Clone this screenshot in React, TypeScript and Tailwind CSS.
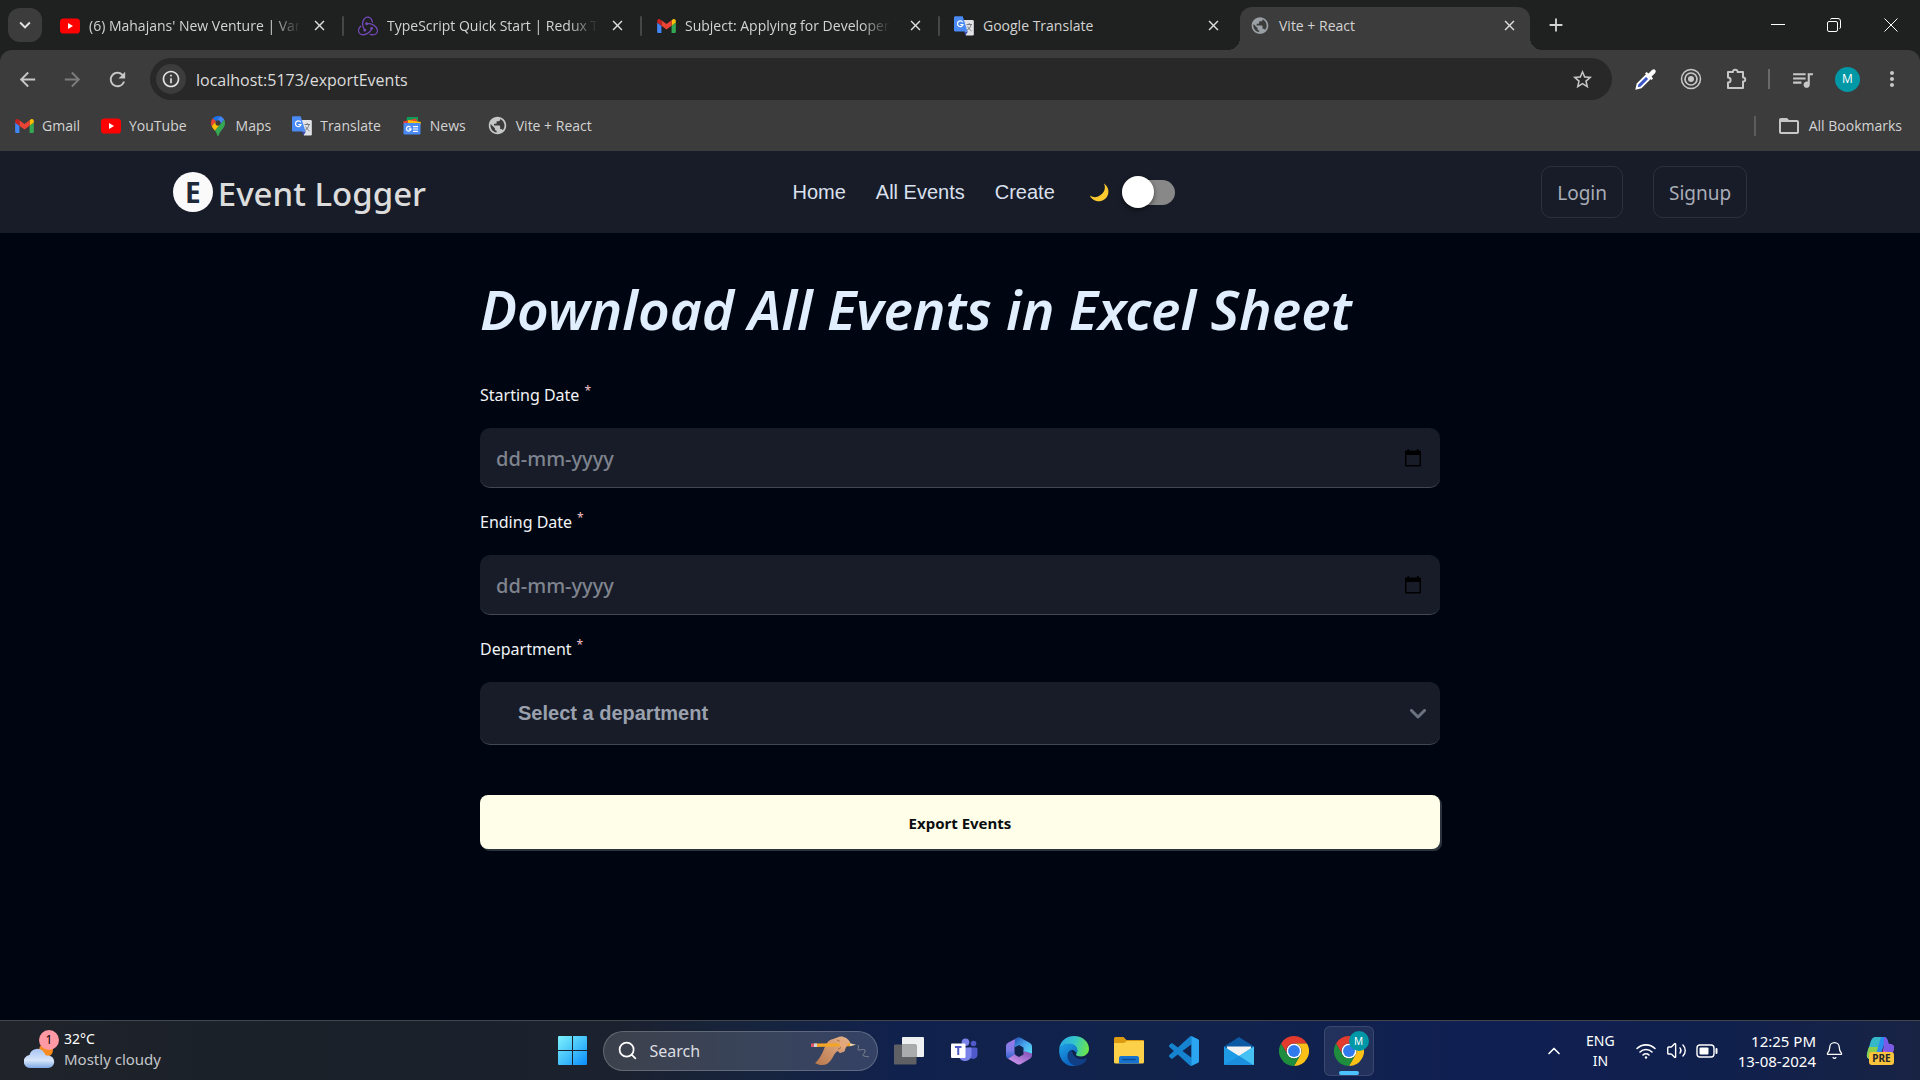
import { useState, type ReactNode } from "react";
import {
  MdArrowBack,
  MdArrowForward,
  MdRefresh,
  MdInfoOutline,
  MdStarOutline,
  MdQueueMusic,
  MdMoreVert,
  MdKeyboardArrowDown,
  MdFolderOpen,
  MdClose,
  MdAdd,
  MdPublic,
} from "react-icons/md";
import { SiRedux } from "react-icons/si";
import { Bell, ChevronUp, Search, Volume2 } from "lucide-react";

function YouTubeIcon() {
  return (
    <svg viewBox="0 0 20 16" className="h-4 w-5 shrink-0" aria-hidden="true">
      <rect width="20" height="15" y="0.5" rx="3.6" fill="#ff0000" />
      <path d="M8 5v6l5-3z" fill="#fff" />
    </svg>
  );
}

function GmailIcon() {
  return (
    <svg viewBox="52 42 88 66" className="h-[14px] w-[19px] shrink-0" aria-hidden="true">
      <path fill="#4285f4" d="M58 108h14V74L52 59v43c0 3.32 2.69 6 6 6" />
      <path fill="#34a853" d="M120 108h14c3.32 0 6-2.69 6-6V59l-20 15" />
      <path fill="#fbbc04" d="M120 48v26l20-15v-8c0-7.42-8.47-11.65-14.4-7.2" />
      <path fill="#ea4335" d="M72 74V48l24 18 24-18v26L96 92" />
      <path fill="#c5221f" d="M52 51v8l20 15V48l-5.6-4.2c-5.94-4.45-14.4-.22-14.4 7.2" />
    </svg>
  );
}

function MapsIcon() {
  return (
    <svg viewBox="0 0 92.3 132.3" className="h-5 w-5 shrink-0" aria-hidden="true">
      <path fill="#1a73e8" d="M60.2 2.2C55.8.8 51 0 46.1 0 32 0 19.3 6.4 10.8 16.5l21.8 18.3L60.2 2.2z" />
      <path fill="#ea4335" d="M10.8 16.5C4.1 24.5 0 34.9 0 46.1c0 8.7 1.7 15.7 4.6 22l28-33.3-21.8-18.3z" />
      <path
        fill="#4285f4"
        d="M46.2 28.5c9.8 0 17.7 7.9 17.7 17.7 0 4.3-1.6 8.3-4.2 11.4 0 0 13.9-16.6 27.5-32.7-5.6-10.8-15.3-19-27-22.7L32.6 34.8c3.3-3.8 8.1-6.3 13.6-6.3"
      />
      <path
        fill="#fbbc04"
        d="M46.2 63.8c-9.8 0-17.7-7.9-17.7-17.7 0-4.3 1.5-8.3 4.1-11.3l-28 33.3c4.8 10.6 12.8 19.2 21 29.9l34.1-40.5c-3.3 3.9-8.1 6.3-13.5 6.3"
      />
      <path
        fill="#34a853"
        d="M59.1 109.2c15.4-24.1 33.3-35 33.3-63 0-7.7-1.9-14.9-5.2-21.3L25.6 98c2.6 3.4 5.3 7.3 7.9 11.3 9.4 14.5 6.8 23.1 12.8 23.1s3.4-8.7 12.8-23.2"
      />
    </svg>
  );
}

function TranslateIcon() {
  return (
    <svg viewBox="0 0 20 20" className="size-5 shrink-0" aria-hidden="true">
      <path d="M8 4h10.500a1.300 1.300 0 0 1 1.300 1.300v13a1.300 1.300 0 0 1-1.300 1.300H12z" fill="#e1e3e6" />
      <path d="M10 15.500h4l-2.600 4z" fill="#3949ab" />
      <path d="M1.300.3h7.400l4.800 15.200H1.300A1.300 1.300 0 0 1 0 14.200V1.600A1.300 1.300 0 0 1 1.300.3z" fill="#4a8af4" />
      <path d="M8.700 6.300A2.800 2.800 0 1 0 9 8.500H6.300" fill="none" stroke="#fff" strokeWidth="1.200" />
      <path d="M12.500 8.500h5.500M15.200 7v1.500M17 8.500c-.4 2.600-2 4.700-4 5.800M13.700 10.500c.8 1.900 2 3.300 3.800 4.400" fill="none" stroke="#6b7177" strokeWidth="0.900" />
    </svg>
  );
}

function NewsIcon() {
  return (
    <svg viewBox="0 0 20 18" className="h-[18px] w-5 shrink-0" aria-hidden="true">
      <path d="M5 0h11v7H4z" fill="#0c9d58" />
      <path d="M1 4.500l13-3 3 6H2z" fill="#ea4335" />
      <path d="M6 3l13 2-1.500 5H6z" fill="#ffc107" />
      <rect x="1.500" y="6" width="17" height="11.500" rx="1.200" fill="#4a8af4" />
      <path d="M8.500 10.300A2.300 2.300 0 1 0 9 12H6.700" fill="none" stroke="#fff" strokeWidth="1.300" />
      <path d="M11 9.700h5M11 12h5M11 14.300h5" stroke="#fff" strokeWidth="1.200" />
    </svg>
  );
}

function ChromeIcon() {
  return (
    <svg viewBox="0 0 48 48" className="size-[30px]" aria-hidden="true">
      <circle cx="24" cy="24" r="12" fill="#fff" />
      <path d="M24 12h20.781a23.994 23.994 0 0 0-41.564.003L13.608 30l.009-.002A11.985 11.985 0 0 1 24 12z" fill="#e33b2e" />
      <path d="M34.391 30.003L24.001 48A23.994 23.994 0 0 0 44.780 12.003H23.999l-.003.009a11.985 11.985 0 0 1 10.395 17.991z" fill="#fbc116" />
      <path d="M13.609 30.003L3.218 12.006A23.994 23.994 0 0 0 24.003 48l10.390-17.997-.007-.007a11.985 11.985 0 0 1-20.778.007z" fill="#1e8e3e" />
      <circle cx="24" cy="24" r="9.500" fill="#2f7bee" />
    </svg>
  );
}

function WindowsIcon() {
  return (
    <svg viewBox="0 0 29 29" className="size-[29px]" aria-hidden="true">
      <defs>
        <linearGradient id="win" x1="0" y1="0" x2="1" y2="1">
          <stop offset="0" stopColor="#7df1fd" />
          <stop offset="0.500" stopColor="#45c3fb" />
          <stop offset="1" stopColor="#0a8cfb" />
        </linearGradient>
      </defs>
      <path d="M1 0h13v14H0V1a1 1 0 0 1 1-1zM15 0h13a1 1 0 0 1 1 1v13H15zM0 15h14v14H1a1 1 0 0 1-1-1zM15 15h14v13a1 1 0 0 1-1 1H15z" fill="url(#win)" />
    </svg>
  );
}

function TaskViewIcon() {
  return (
    <svg viewBox="0 0 30 28" className="h-7 w-[30px]" aria-hidden="true">
      <rect x="8" y="0" width="22" height="20" rx="1" fill="#eef0f2" />
      <rect x="0" y="7.500" width="22.500" height="20" rx="1" fill="#5e6063" />
      <path d="M8 8h14.500v12H8z" fill="#a9abad" />
    </svg>
  );
}

function TeamsIcon() {
  return (
    <svg viewBox="0 0 28 26" className="h-[26px] w-7" aria-hidden="true">
      <circle cx="23.500" cy="5.500" r="2.800" fill="#5059c9" />
      <path d="M19 9.500h7a1.500 1.500 0 0 1 1.500 1.500v5.500a4.500 4.500 0 0 1-8.500 2z" fill="#5059c9" />
      <circle cx="15.500" cy="4.300" r="3.800" fill="#7b83eb" />
      <path d="M10 9.500h10.500a1 1 0 0 1 1 1V17a6.500 6.500 0 0 1-12.500 2z" fill="#7b83eb" />
      <rect x="1" y="5.500" width="14.500" height="14.500" rx="1" fill="#fff" />
      <path d="M5 9h6.500M8.250 9v8" stroke="#5059c9" strokeWidth="2" />
    </svg>
  );
}

function OfficeIcon() {
  return (
    <svg viewBox="0 0 26 28" className="h-7 w-[26px]" aria-hidden="true">
      <defs>
        <linearGradient id="off1" x1="0" y1="0" x2="0" y2="1">
          <stop offset="0" stopColor="#a678e6" />
          <stop offset="0.600" stopColor="#7a7ce8" />
          <stop offset="1" stopColor="#2f62c8" />
        </linearGradient>
        <linearGradient id="off2" x1="0" y1="0" x2="1" y2="1">
          <stop offset="0" stopColor="#1c4fae" />
          <stop offset="0.500" stopColor="#4aa6f0" />
          <stop offset="1" stopColor="#58e1f2" />
        </linearGradient>
        <linearGradient id="off3" x1="0" y1="1" x2="1" y2="0">
          <stop offset="0" stopColor="#d9a2f7" />
          <stop offset="1" stopColor="#7a4bb0" />
        </linearGradient>
      </defs>
      <path d="M12 0.500L2 5.800Q0 6.900 0 9v9.500q0 2.200 2 3.200L9.500 18 8.500 16V9.500z" fill="url(#off1)" />
      <path d="M9 2l3-1.600q1-.5 2 0L24 6q2 1.200 2 3.500v8L17.500 15v-4.500L13 8 8.500 10.500z" fill="url(#off2)" />
      <path d="M26 16.500V18.500q0 2-2 3.200L15 27q-2 1.200-4 0L2 21.700l6.500-4.200L13 20l4.500-2.500V14z" fill="url(#off3)" />
    </svg>
  );
}

function EdgeIcon() {
  return (
    <svg viewBox="0 0 30 30" className="size-[30px]" aria-hidden="true">
      <defs>
        <linearGradient id="edge1" x1="0" y1="0.300" x2="1" y2="0.500">
          <stop offset="0" stopColor="#2aa9e8" />
          <stop offset="0.500" stopColor="#35c6c8" />
          <stop offset="1" stopColor="#6be64a" />
        </linearGradient>
        <linearGradient id="edge2" x1="0" y1="0" x2="0.500" y2="1">
          <stop offset="0" stopColor="#1fa4e8" />
          <stop offset="1" stopColor="#0c62bd" />
        </linearGradient>
      </defs>
      <path d="M.2 14C.2 6 6.800 0 15 0c9 0 15 6.200 15 12.800 0 4.700-3.700 7.700-8 7.700-3 0-5-1-5-2 0-.8 1.300-1.500 1.300-4C18 10.500 14.500 8 10 8 4.500 8 1 11 .2 14z" fill="url(#edge1)" />
      <path d="M.1 14.500C1 10.500 5 7.500 10 7.500c5 0 8.300 3 8.300 6.500 0 1.500-.6 2.600-1.200 3.400-.3-2-2-3.400-3.800-3.400-3 0-5 3-4.300 7 .7 4.500 4.500 8.500 9 8.700C8 32 .1 25 .1 14.500z" fill="url(#edge2)" />
      <path d="M13 14c-3 1-5.200 4-4.300 8 1 4.500 5 7.600 9.300 7.700 4.500-.5 8-3 9.800-6.500.4-.8-.2-1-1-.7-4 1.600-9.800.5-12.200-3.500-1.200-2-1.500-3.700-1.600-5z" fill="#103f86" />
    </svg>
  );
}

function ExplorerIcon() {
  return (
    <svg viewBox="0 0 30 27" className="h-[27px] w-[30px]" aria-hidden="true">
      <path d="M0 1.500Q0 0 1.500 0h8l3 3H29q1 0 1 1v5H0z" fill="#dc9a10" />
      <path d="M0 6h10l3-2h17v21q0 1.500-1.500 1.500h-27Q0 26.500 0 25z" fill="#fdd04a" />
      <path d="M5 26.500V21q0-2 2-2h16q2 0 2 2v5.500z" fill="#1673cf" />
      <path d="M9 22.500h12" stroke="#0b4b94" strokeWidth="1.400" strokeLinecap="round" />
    </svg>
  );
}

function VsCodeIcon() {
  return (
    <svg viewBox="0 0 24 24" className="size-[30px]" aria-hidden="true">
      <path
        d="M23.150 2.587L18.210.21a1.494 1.494 0 0 0-1.705.29l-9.460 8.630-4.120-3.128a.999.999 0 0 0-1.276.057L.327 7.261A1 1 0 0 0 .326 8.740L3.899 12 .326 15.260a1 1 0 0 0 .001 1.479L1.650 17.940a.999.999 0 0 0 1.276.057l4.120-3.128 9.460 8.630a1.492 1.492 0 0 0 1.704.29l4.942-2.377A1.500 1.500 0 0 0 24 20.060V3.939a1.500 1.500 0 0 0-.85-1.352zm-5.146 14.861L10.826 12l7.178-5.448v10.896z"
        fill="#1583cf"
      />
      <path d="M18.004 0.150l5.146 2.437A1.500 1.500 0 0 1 24 3.939V20.060a1.500 1.500 0 0 1-.85 1.352L18.004 23.850z" fill="#2ba5ef" />
    </svg>
  );
}

function MailIcon() {
  return (
    <svg viewBox="0 0 30 28" className="h-7 w-[30px]" aria-hidden="true">
      <path d="M15 0L0 9.500V14h30V9.500z" fill="#0c59a4" />
      <path d="M3 9.500h24V16l-12 6-12-6z" fill="#f3f3f3" />
      <path d="M0 9.500L15 19l15-9.500V27q0 1-1 1H1q-1 0-1-1z" fill="#1f9be6" />
      <path d="M15 19l15-9.500V27q0 1-1 1z" fill="#46c1f3" />
      <path d="M0 28l15-9 14 9z" fill="#1b8fdd" />
    </svg>
  );
}

function PencilHand() {
  return (
    <svg viewBox="0 0 58 30" className="h-[30px] w-[58px]" aria-hidden="true">
      <defs>
        <linearGradient id="skin" x1="1" y1="0" x2="0" y2="1">
          <stop offset="0" stopColor="#e8b58c" />
          <stop offset="1" stopColor="#b9774d" />
        </linearGradient>
      </defs>
      <path d="M4 27c4-3 7-9 9-14 2-5 4-9 9-10l7-2.500c4-.5 8 2 10 5.500 1 2-1 4-3 4l-2 1c1 3-1 6-3 5-1 2-3 1-4-1-2 1-3 2-4 4-2 4-4 7-7 9-4 2-9 1-12-1z" fill="url(#skin)" />
      <path d="M26 4c3 1 5 3 7 5M27 13c2 0 3-1 3-3" fill="none" stroke="#a4663f" strokeWidth="0.900" />
      <path d="M3 7.500l36-.2v3L3 11z" fill="#f4a526" />
      <path d="M0 7.500h3V11H0z" fill="#e0566b" />
      <path d="M3 7.500h3V11H3z" fill="#cfd3d8" />
      <path d="M39 7.300l6 1.500-6 1.500z" fill="#f2d7a8" />
      <path d="M28 6c3-3 8-2 9 2l-3 5c-3 0-6-3-6-7z" fill="#e2a87c" />
      <path d="M47 9c2 3-2 5 1 5s6-2 6 1-4 4-1 5 3 0 5 1" fill="none" stroke="#7f8490" strokeWidth="1" />
    </svg>
  );
}

function WeatherIcon() {
  return (
    <svg viewBox="0 0 31 28" className="h-7 w-[31px]" aria-hidden="true">
      <defs>
        <linearGradient id="cloud" x1="0" y1="0" x2="0" y2="1">
          <stop offset="0" stopColor="#a9c5f4" />
          <stop offset="0.600" stopColor="#d6e5fb" />
          <stop offset="1" stopColor="#7fa8e6" />
        </linearGradient>
      </defs>
      <circle cx="22" cy="9" r="7" fill="#f78b1f" />
      <path d="M7 27a6.500 6.500 0 0 1-1.500-13A8 8 0 0 1 20 11.500q1.500 1.500 1.800 3H24a6.200 6.200 0 0 1 0 12.500z" fill="url(#cloud)" />
    </svg>
  );
}

function CopilotIcon() {
  return (
    <svg viewBox="0 0 30 30" className="size-[30px]" aria-hidden="true">
      <path d="M11 1h8q2.500 0 3.500 3l1.500 5h-5l-5 14H6q-5 0-4-5L6 5q1.500-4 5-4z" fill="#2a8df0" />
      <path d="M6 5q1.500-4 5-4h5l-4.500 15q-1.500 7-6 7Q1 23 2 18z" fill="#35b9c8" />
      <path d="M2 18q1-5 2-7h9l-1.500 5q-1.500 7-6 7Q1 23 2 18z" fill="#8ccf4a" />
      <path d="M20 8h4q6 0 5 5l-3.500 11q-1 4-5 4H12q-3 0-3.500-3h6z" fill="#d858c8" />
      <path d="M19 1q2.500 0 3.500 3l1.300 4q6.200 0 5.200 5l-1.500 4-9-2z" fill="#7a5be8" />
      <rect x="4" y="16" width="25" height="13" rx="3" fill="#f9c33c" />
      <text x="16.500" y="26" textAnchor="middle" fontSize="10" fontWeight="700" fontFamily="Noto Sans, sans-serif" fill="#20242c">
        PRE
      </text>
    </svg>
  );
}

function Tab({ icon, title, active, divider, fade }: { icon: ReactNode; title: string; active?: boolean; divider?: boolean; fade?: boolean }) {
  return (
    <div
      className={
        active
          ? "relative flex h-[43px] w-[290px] shrink items-center gap-[9px] self-end rounded-t-xl bg-[#3c3c3c] pr-[11px] pb-[6px] pl-[10px]"
          : "flex h-[43px] w-[298px] shrink items-center gap-[9px] self-end pr-[2px] pb-[6px] pl-3"
      }
    >
      {active && (
        <>
          <span className="absolute bottom-0 -left-3 size-3 bg-[radial-gradient(circle_at_0_0,transparent_12px,#3c3c3c_12px)]" />
          <span className="absolute -right-3 bottom-0 size-3 bg-[radial-gradient(circle_at_100%_0,transparent_12px,#3c3c3c_12px)]" />
        </>
      )}
      <span className="flex w-5 shrink-0 justify-center">{icon}</span>
      <span className="min-w-0 flex-1 whitespace-nowrap">
        <span className={fade ? "inline-block [mask-image:linear-gradient(to_right,black_86%,transparent)]" : "inline-block"}>{title}</span>
      </span>
      <button type="button" aria-label={"Close " + title} className="flex w-5 shrink-0 justify-center text-[#dedede]">
        <MdClose size={17} />
      </button>
      {!active && <span className={divider ? "ml-1 h-5 w-[2px] rounded bg-[#454746]" : "ml-1 w-[2px]"} />}
    </div>
  );
}

function Bookmark({ icon, label }: { icon: ReactNode; label: string }) {
  return (
    <a href="#bookmark" className="flex items-center gap-2 whitespace-nowrap">
      {icon}
      {label}
    </a>
  );
}

function BrowserChrome() {
  return (
    <header className="bg-[#1f2120] font-['Open_Sans','Noto_Sans',sans-serif] text-sm text-[#d3d3d3]">
      <div className="flex h-[50px] items-center pl-2">
        <button type="button" aria-label="Search tabs" className="mr-[6px] flex size-[34px] shrink-0 items-center justify-center rounded-xl bg-[#3c3c3c] text-[#e3e3e3]">
          <MdKeyboardArrowDown size={22} />
        </button>
        <Tab icon={<YouTubeIcon />} title="(6) Mahajans' New Venture | Var" fade divider />
        <Tab icon={<SiRedux size={20} color="#764abc" />} title="TypeScript Quick Start | Redux T" fade divider />
        <Tab icon={<GmailIcon />} title="Subject: Applying for Developer" fade divider />
        <Tab icon={<TranslateIcon />} title="Google Translate" />
        <Tab icon={<MdPublic size={21} color="#9aa0a6" />} title="Vite + React" active />
        <button type="button" aria-label="New tab" className="ml-[15px] text-[#d3d3d3]">
          <MdAdd size={22} />
        </button>
        <div className="ml-auto flex items-center text-white">
          <button type="button" aria-label="Minimize" className="flex w-14 justify-center">
            <svg viewBox="0 0 14 14" className="size-[14px]">
              <path d="M0 6.500h14" stroke="currentColor" />
            </svg>
          </button>
          <button type="button" aria-label="Restore" className="flex w-14 justify-center">
            <svg viewBox="0 0 14 14" className="size-[14px]" fill="none" stroke="currentColor">
              <rect x="0.500" y="3.500" width="10" height="10" rx="1.500" />
              <path d="M3.500 1.500q0-1 1.500-1h6q2.500 0 2.500 2.500v6q0 1.500-1 1.500" />
            </svg>
          </button>
          <button type="button" aria-label="Close window" className="flex w-[58px] justify-center">
            <svg viewBox="0 0 14 14" className="size-[14px]">
              <path d="M0.500 0.500l13 13M13.500 0.500l-13 13" stroke="currentColor" />
            </svg>
          </button>
        </div>
      </div>

      <div className="rounded-t-xl bg-[#3c3c3c]">
        <div className="flex items-center pt-2 pr-4 pl-4 text-[#c7c7c7]">
          <div className="flex w-[134px] items-center gap-[22px]">
            <button type="button" aria-label="Back">
              <MdArrowBack size={23} />
            </button>
            <button type="button" aria-label="Forward" className="text-[#7c7c7c]">
              <MdArrowForward size={23} />
            </button>
            <button type="button" aria-label="Reload">
              <MdRefresh size={23} />
            </button>
          </div>
          <div className="flex h-[42px] flex-1 items-center rounded-full bg-[#282828] pr-[18px] pl-[6px]">
            <button type="button" aria-label="Site information" className="flex size-[30px] items-center justify-center rounded-full bg-[#3c3c3c] text-[#e3e3e3]">
              <MdInfoOutline size={20} />
            </button>
            <input
              aria-label="Address"
              defaultValue="localhost:5173/exportEvents"
              className="ml-[10px] min-w-0 flex-1 bg-transparent pt-px text-base text-[#dcdcdc] outline-none"
            />
            <button type="button" aria-label="Bookmark this page">
              <MdStarOutline size={23} />
            </button>
          </div>
          <div className="flex items-center pl-[22px]">
            <button type="button" aria-label="Color picker">
              <svg viewBox="0 0 24 24" className="size-6">
                <path d="M2.500 21.500l1-4.500L12 8.500l3.500 3.500L7 20.500z" fill="#3a55c8" stroke="#fff" strokeWidth="1.800" />
                <path d="M11 6.500l1.500-1.500 2 1.500L18 3q2-1.500 3.300 0 1.200 1.500-.3 3.200L17.500 9.500l1.500 2-1.500 1.500z" fill="#fff" />
              </svg>
            </button>
            <button type="button" aria-label="Recorder" className="ml-[21px]">
              <svg viewBox="0 0 24 24" className="size-6" fill="none" stroke="currentColor">
                <circle cx="12" cy="12" r="9.500" strokeWidth="1.500" />
                <circle cx="12" cy="12" r="6" strokeWidth="1.700" />
                <circle cx="12" cy="12" r="3" fill="currentColor" stroke="none" />
              </svg>
            </button>
            <button type="button" aria-label="Extensions" className="ml-[21px]">
              <svg viewBox="0 0 24 24" className="size-6" fill="none" stroke="currentColor" strokeWidth="2" strokeLinejoin="round">
                <path d="M4 5h5c-.5-3 5-3 4.500 0H19v5.500c3-.5 3 4.500 0 4V21H4v-5.500c3.500 0 3.500-5 0-5z" />
              </svg>
            </button>
            <span className="mx-[20px] h-5 w-[2px] bg-[#6a6a6a]" />
            <button type="button" aria-label="Media controls">
              <MdQueueMusic size={25} />
            </button>
            <button type="button" aria-label="Profile" className="ml-5 flex size-[25px] items-center justify-center rounded-full bg-[#0097a7] text-xs text-white">
              M
            </button>
            <button type="button" aria-label="Menu" className="ml-5">
              <MdMoreVert size={24} />
            </button>
          </div>
        </div>
        <nav aria-label="Bookmarks" className="flex h-[51px] items-center gap-[21px] pr-[18px] pl-[15px]">
          <Bookmark icon={<GmailIcon />} label="Gmail" />
          <Bookmark icon={<YouTubeIcon />} label="YouTube" />
          <Bookmark icon={<MapsIcon />} label="Maps" />
          <Bookmark icon={<TranslateIcon />} label="Translate" />
          <Bookmark icon={<NewsIcon />} label="News" />
          <Bookmark icon={<MdPublic size={21} color="#c4c7c5" />} label="Vite + React" />
          <span className="ml-auto h-5 w-[2px] bg-[#5c5c5c]" />
          <Bookmark icon={<MdFolderOpen size={24} color="#c7c7c7" />} label="All Bookmarks" />
        </nav>
      </div>
    </header>
  );
}

function SiteNav() {
  const [light, setLight] = useState(false);
  return (
    <div className="flex h-[82px] items-center justify-between bg-[#171c28] px-[9%]">
      <a href="#home" className="flex items-center gap-[5px]">
        <span className="flex size-10 items-center justify-center rounded-full bg-[#fafafa] text-[28px] leading-10 font-bold text-[#1f2937]">E</span>
        <span className="pt-1 text-[33px] leading-10 font-medium text-[#dcdcdc]">Event Logger</span>
      </a>
      <nav aria-label="Main" className="flex items-center font-['Liberation_Sans',Arial,sans-serif] text-xl text-[#dbe0ee]">
        <a href="#home">Home</a>
        <a href="#events" className="ml-[30px]">
          All Events
        </a>
        <a href="#create" className="ml-[30px]">
          Create
        </a>
        <svg viewBox="0 0 20 20" className="ml-[34px] size-5" aria-hidden="true">
          <path d="M15 1.500A9.700 9.700 0 1 1 .8 13.500 9.800 9.800 0 0 0 15 1.500z" fill="#fdc92f" />
        </svg>
        <label className="relative ml-[13px] flex h-8 w-[53px] cursor-pointer items-center">
          <input type="checkbox" aria-label="Light theme" checked={light} onChange={(e) => setLight(e.target.checked)} className="peer sr-only" />
          <span className="h-[25px] w-full rounded-full bg-[#888888]" />
          <span className="absolute top-0 left-0 size-8 rounded-full bg-white shadow-[0_2px_5px_rgba(0,0,0,0.5)] peer-checked:left-[21px]" />
        </label>
      </nav>
      <div className="flex items-center gap-[30px] text-[19px] text-[#a9adb6]">
        <button type="button" className="h-[52px] rounded-[10px] border border-[#2a303c] px-[15px] pt-[2px]">
          Login
        </button>
        <button type="button" className="h-[52px] rounded-[10px] border border-[#2a303c] px-[15px] pt-[2px]">
          Signup
        </button>
      </div>
    </div>
  );
}

function FieldLabel({ htmlFor, children }: { htmlFor: string; children: ReactNode }) {
  return (
    <label htmlFor={htmlFor} className="flex h-[67px] items-center pt-px text-base text-[#f1f3f6]">
      {children}
      <span className="mb-2 ml-[5px] text-xs text-[#f3c3cb]">*</span>
    </label>
  );
}

function DateField({ id, label }: { id: string; label: string }) {
  return (
    <div>
      <FieldLabel htmlFor={id}>{label}</FieldLabel>
      <div className="flex h-[60px] items-center rounded-[10px] border-b border-[#424753] bg-[#171c28] pr-[18px] pl-4">
        <input id={id} placeholder="dd-mm-yyyy" className="min-w-0 flex-1 bg-transparent pt-[2px] text-xl font-medium text-[#c9ccd3] outline-none placeholder:text-[#7f848f]" />
        <button type="button" aria-label={"Choose " + label.toLowerCase()}>
          <svg viewBox="0 0 18 18" className="size-[18px]" aria-hidden="true">
            <path d="M3.500 0h1.500v1.500h8V0h1.500v1.500H16q1 0 1 1V16.500q0 1-1 1H2q-1 0-1-1v-14q0-1 1-1h1.500zM2.500 6v10h13V6z" fill="#000" />
          </svg>
        </button>
      </div>
    </div>
  );
}

function ExportForm() {
  return (
    <main className="mx-auto w-1/2 flex-1 pb-16">
      <h1 className="mt-[42px] mb-[18px] text-[55px] leading-[68px] font-semibold whitespace-nowrap text-[#e1eefe] italic">Download All Events in Excel Sheet</h1>
      <form className="flex flex-col" onSubmit={(e) => e.preventDefault()}>
        <DateField id="start" label="Starting Date" />
        <DateField id="end" label="Ending Date" />
        <FieldLabel htmlFor="department">Department</FieldLabel>
        <div className="relative">
          <select
            id="department"
            className="block h-[63px] w-full appearance-none rounded-[10px] border-b border-[#424753] bg-[#171c28] px-[38px] font-['Liberation_Sans',Arial,sans-serif] text-xl font-bold text-[#9aa0ad] outline-none"
          >
            <option>Select a department</option>
          </select>
          <svg viewBox="0 0 16 10" className="pointer-events-none absolute top-1/2 right-[14px] h-[10px] w-4 -translate-y-1/2" aria-hidden="true">
            <path d="M1.500 1.500L8 8l6.500-6.500" fill="none" stroke="#6b7280" strokeWidth="3" strokeLinecap="round" strokeLinejoin="round" />
          </svg>
        </div>
        <button type="submit" className="mt-[50px] h-[54px] w-full rounded-lg bg-[#fffee8] pt-[2px] text-[15px] font-bold text-[#0b0d10] shadow-[2px_2px_0_#2b343c]">
          Export Events
        </button>
      </form>
    </main>
  );
}

function TaskbarButton({ label, children }: { label: string; children: ReactNode }) {
  return (
    <button type="button" aria-label={label} className="flex h-[50px] w-[55px] items-center justify-center">
      {children}
    </button>
  );
}

function Taskbar() {
  return (
    <footer className="grid h-[60px] grid-cols-[1fr_auto_1fr] items-center border-t border-[#43464d] bg-[linear-gradient(to_right,#20232a_0%,#1a2129_15%,#1b212e_32%,#16243f_40%,#10214d_47%,#11234b_60%,#101f52_78%,#10204c_90%,#182344_100%)] text-[15px] leading-5 text-white">
      <button type="button" className="flex items-center justify-self-start pl-6 text-left">
        <span className="relative flex h-9 w-[35px] items-end">
          <WeatherIcon />
          <span className="absolute -top-[3px] right-0 flex size-5 items-center justify-center rounded-full bg-[#ff99a4] text-xs text-black">1</span>
        </span>
        <span className="mb-[3px] ml-[5px]">
          <span className="block text-sm leading-5">32°C</span>
          <span className="block text-[#c3c6ca]">Mostly cloudy</span>
        </span>
      </button>

      <div className="flex items-center pl-[11px]">
        <button type="button" aria-label="Start" className="mr-4">
          <WindowsIcon />
        </button>
        <label className="mr-1 flex h-10 w-[275px] items-center rounded-full border border-white/20 bg-white/15 pr-2 pl-[13px]">
          <Search size={21} className="text-white" />
          <input aria-label="Search" placeholder="Search" className="ml-3 w-[120px] flex-1 bg-transparent text-base outline-none placeholder:text-[#dcdee2]" />
          <PencilHand />
        </label>
        <TaskbarButton label="Task view">
          <TaskViewIcon />
        </TaskbarButton>
        <TaskbarButton label="Teams">
          <TeamsIcon />
        </TaskbarButton>
        <TaskbarButton label="Microsoft 365">
          <OfficeIcon />
        </TaskbarButton>
        <TaskbarButton label="Edge">
          <EdgeIcon />
        </TaskbarButton>
        <TaskbarButton label="File Explorer">
          <ExplorerIcon />
        </TaskbarButton>
        <TaskbarButton label="Visual Studio Code">
          <VsCodeIcon />
        </TaskbarButton>
        <TaskbarButton label="Mail">
          <MailIcon />
        </TaskbarButton>
        <TaskbarButton label="Chrome">
          <ChromeIcon />
        </TaskbarButton>
        <button type="button" aria-label="Chrome, active window" className="relative ml-[2px] flex size-[50px] items-center justify-center rounded-md border border-white/10 bg-white/8">
          <ChromeIcon />
          <span className="absolute top-1 right-1 flex size-5 items-center justify-center rounded-full bg-[#0097a7] text-[10px] text-white">M</span>
          <span className="absolute bottom-0 left-[14px] h-1 w-5 rounded-full bg-[#4cc2ff]" />
        </button>
      </div>

      <div className="flex items-center justify-self-end pr-[25px]">
        <button type="button" aria-label="Show hidden icons">
          <ChevronUp size={20} />
        </button>
        <button type="button" className="ml-[22px] text-center text-sm leading-5">
          <span className="block">ENG</span>
          <span className="block">IN</span>
        </button>
        <button type="button" aria-label="Network, volume and battery" className="ml-5 flex items-center gap-[9px]">
          <svg viewBox="0 0 22 18" className="h-[18px] w-[22px]" fill="none" stroke="currentColor" strokeWidth="1.600" strokeLinecap="round">
            <path d="M2 6.500a13 13 0 0 1 18 0M5 10a8.600 8.600 0 0 1 12 0M8 13a4.300 4.300 0 0 1 6 0" />
            <circle cx="11" cy="15.500" r="1.200" fill="currentColor" stroke="none" />
          </svg>
          <Volume2 size={21} strokeWidth={1.6} />
          <svg viewBox="0 0 22 14" className="h-[14px] w-[22px]" fill="none" stroke="currentColor" strokeWidth="1.400">
            <rect x="1" y="1" width="17" height="12" rx="3" />
            <rect x="3.500" y="3.500" width="9" height="7" rx="1" fill="currentColor" stroke="none" />
            <path d="M20.500 5v4" strokeWidth="2" strokeLinecap="round" />
          </svg>
        </button>
        <button type="button" className="ml-5 text-right whitespace-nowrap">
          <span className="block">12:25 PM</span>
          <span className="block">13-08-2024</span>
        </button>
        <button type="button" aria-label="Notifications" className="ml-[9px]">
          <Bell size={19} strokeWidth={1.6} />
        </button>
        <button type="button" aria-label="Copilot" className="ml-[21px]">
          <CopilotIcon />
        </button>
      </div>
    </footer>
  );
}

export default function App() {
  return (
    <div className="flex min-h-screen flex-col bg-[#000611] font-['Noto_Sans','Open_Sans',sans-serif]">
      <BrowserChrome />
      <SiteNav />
      <ExportForm />
      <Taskbar />
    </div>
  );
}
